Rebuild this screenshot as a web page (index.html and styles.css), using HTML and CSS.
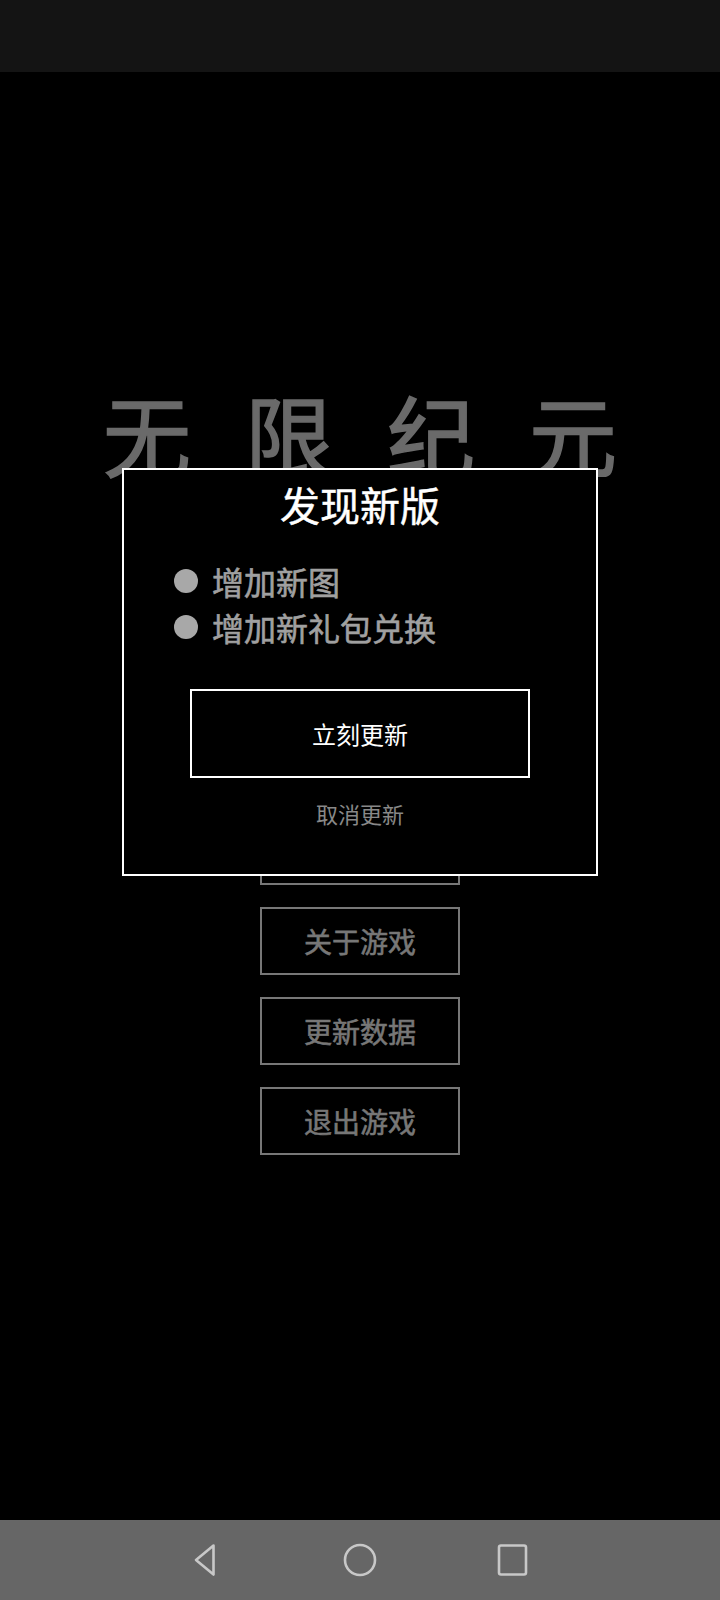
FILE: index.html
```html
<!DOCTYPE html>
<html lang="zh-CN">
<head>
    <meta charset="UTF-8">
    <meta name="viewport" content="width=device-width, initial-scale=1.0">
    <title>无限纪元</title>
    <link rel="stylesheet" href="styles.css">
</head>
<body>
    <div class="status-bar"></div>

    <div class="screen">
        <h1 class="game-title">无限纪元</h1>
        <div class="menu">
            <div class="menu-btn">开始游戏</div>
            <div class="menu-btn">继续游戏</div>
            <div class="menu-btn">礼包兑换</div>
            <div class="menu-btn">游戏设置</div>
            <div class="menu-btn">关于游戏</div>
            <div class="menu-btn">更新数据</div>
            <div class="menu-btn">退出游戏</div>
        </div>

        <!-- update dialog sits on top of the menu -->
        <div class="dialog">
            <h2 class="dialog-title">发现新版</h2>
            <ul class="changes">
                <li><span class="dot"></span>增加新图</li>
                <li><span class="dot"></span>增加新礼包兑换</li>
            </ul>
            <div class="update-btn">立刻更新</div>
            <div class="cancel">取消更新</div>
        </div>
    </div>

    <div class="nav-bar">
        <svg class="nav-icon" viewBox="0 0 40 40">
            <path d="M26.5 5.5 L9 20 L26.5 34.5 Z" fill="none" stroke="#c8c8c8" stroke-width="2.6" stroke-linejoin="round"/>
        </svg>
        <svg class="nav-icon" viewBox="0 0 40 40">
            <circle cx="20" cy="20" r="15" fill="none" stroke="#c8c8c8" stroke-width="2.6"/>
        </svg>
        <svg class="nav-icon" viewBox="0 0 40 40">
            <rect x="6" y="5.5" width="27" height="29" rx="2" fill="none" stroke="#c8c8c8" stroke-width="2.6"/>
        </svg>
    </div>
</body>
</html>
```

FILE: styles.css
```css
body {
    margin: 0;
    width: 720px;
    height: 1600px;
    background: #000;
    font-family: "Noto Sans CJK SC", "Noto Sans", sans-serif;
    display: flex;
    flex-direction: column;
    overflow: hidden;
}
.status-bar {
    height: 72px;
    background: #141414;
}
.screen {
    flex: 1;
    position: relative;
    display: flex;
    flex-direction: column;
    align-items: center;
    padding-top: 316px;
}
.game-title {
    margin: 0;
    font-size: 88px;
    line-height: 88px;
    font-weight: normal;
    color: #6a6a6a;
    -webkit-text-stroke: 1.6px #6a6a6a;
    letter-spacing: 54px;
    padding-left: 54px;
}
.menu {
    margin-top: 71px;
    display: flex;
    flex-direction: column;
    gap: 22px;
}
.menu-btn {
    width: 200px;
    height: 68px;
    box-sizing: border-box;
    border: 2px solid #777;
    color: #777;
    -webkit-text-stroke: 0.6px #777;
    font-size: 28px;
    display: flex;
    align-items: center;
    justify-content: center;
}
.dialog {
    position: absolute;
    top: 396px;
    left: 122px;
    width: 476px;
    height: 408px;
    box-sizing: border-box;
    border: 2px solid #fff;
    background: #000;
    display: flex;
    flex-direction: column;
    align-items: center;
}
.dialog-title {
    margin: 14px 0 0;
    font-size: 40px;
    line-height: 40px;
    font-weight: normal;
    color: #fff;
    -webkit-text-stroke: 0.5px #fff;
}
.changes {
    list-style: none;
    margin: 34px 0 0;
    padding: 0 0 0 50px;
    align-self: stretch;
}
.changes li {
    display: flex;
    align-items: center;
    gap: 14px;
    font-size: 32px;
    line-height: 46px;
    color: #a0a0a0;
    -webkit-text-stroke: 0.6px #a0a0a0;
}
.dot {
    width: 24px;
    height: 24px;
    border-radius: 50%;
    background: #a8a8a8;
}
.update-btn {
    margin-top: 39px;
    width: 340px;
    height: 89px;
    box-sizing: border-box;
    border: 2px solid #fff;
    color: #fff;
    font-size: 24px;
    display: flex;
    align-items: center;
    justify-content: center;
}
.cancel {
    margin-top: 20px;
    font-size: 22px;
    line-height: 30px;
    color: #888;
}
.nav-bar {
    height: 80px;
    background: #666;
    display: flex;
    align-items: center;
    justify-content: center;
    gap: 113px;
}
.nav-icon {
    width: 40px;
    height: 40px;
}
```
